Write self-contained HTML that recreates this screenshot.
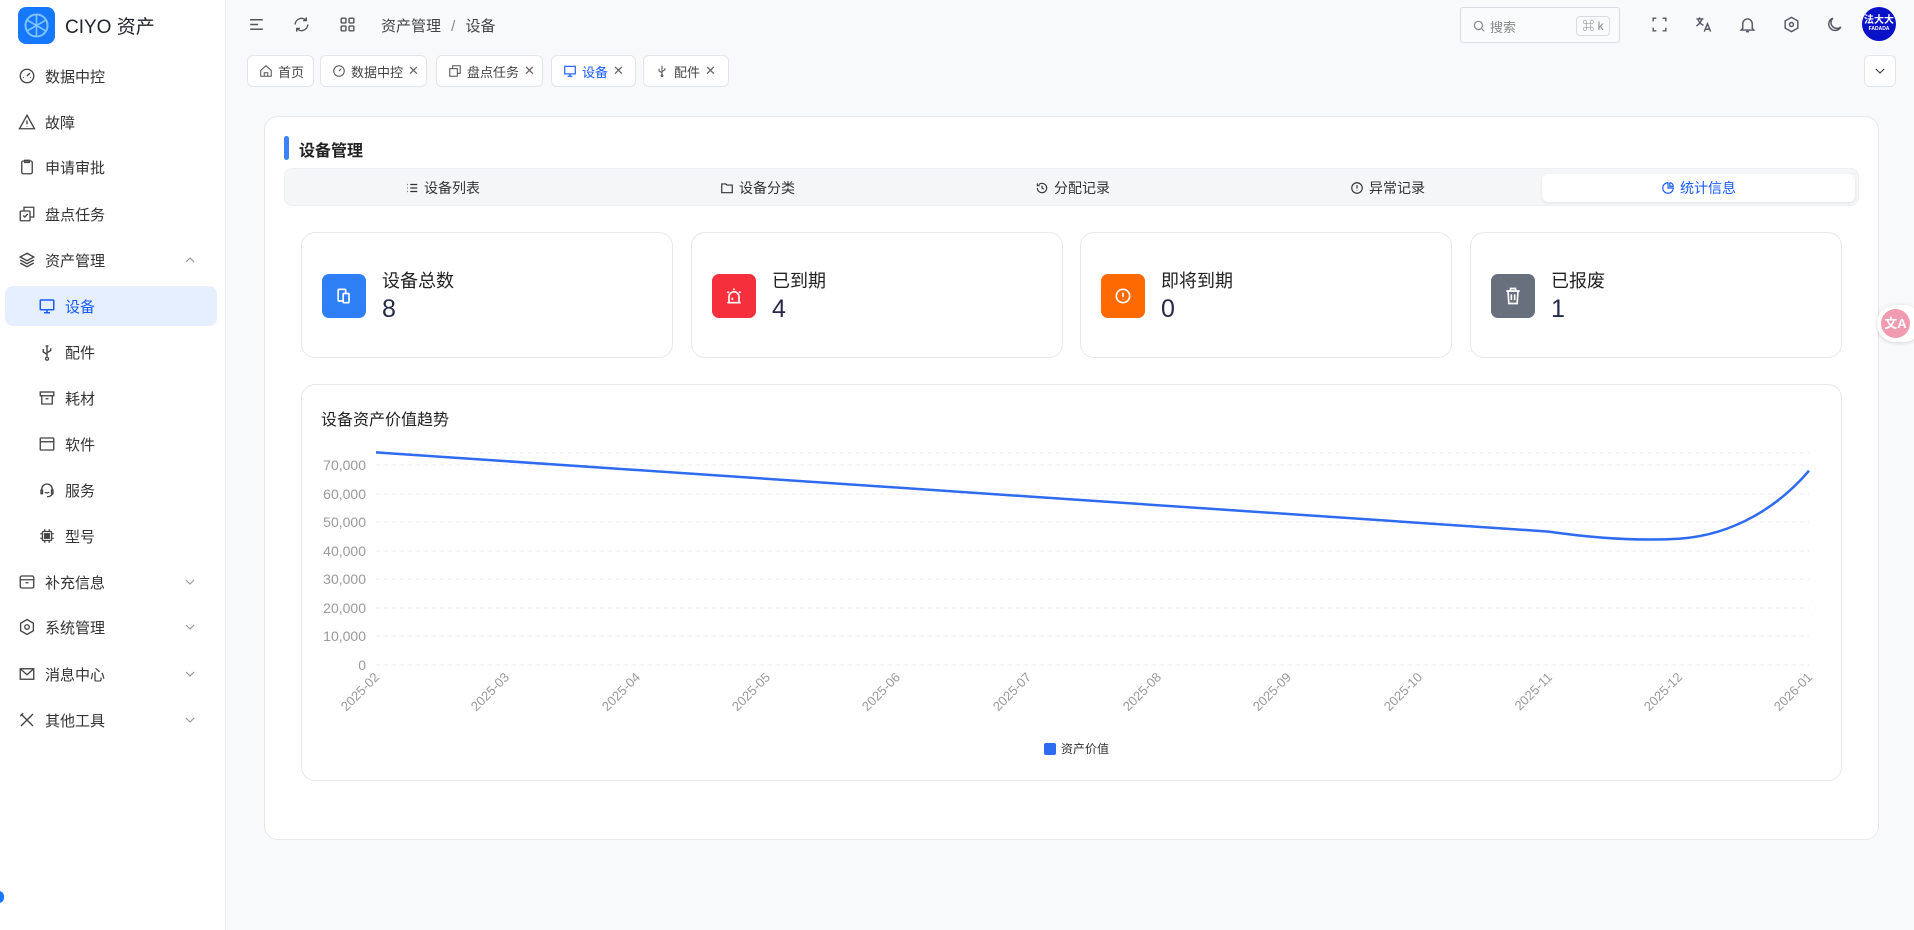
<!DOCTYPE html>
<html><head><meta charset="utf-8"><style>
*{box-sizing:border-box;margin:0;padding:0}
body{width:1914px;height:930px;overflow:hidden;background:#f8f9fb;font-family:"Liberation Sans","Noto Sans CJK SC",sans-serif;color:#1f2329;position:relative}
.side{position:absolute;left:0;top:0;width:226px;height:930px;background:#fff;border-right:1px solid #e8eaee}
.logo{position:absolute;left:18px;top:7px;width:37px;height:37px;border-radius:8px;background:#1677ff}
.brand{position:absolute;left:65px;top:12px;font-size:19px;color:#1f2329}
.mi{position:absolute;left:0;width:226px;height:40px;display:flex;align-items:center;font-size:15px;color:#333}
.mi svg{position:absolute;left:18px;width:18px;height:18px}
.mi span{position:absolute;left:45px}
.mi.sub svg{left:38px}.mi.sub span{left:65px}
.mi .chev{position:absolute;left:184px;width:12px;height:12px}
.act{background:#e6efff;color:#1a5cff;left:5px;width:212px;border-radius:8px}
.act svg{left:33px!important}.act span{left:60px!important}
.hicon{position:absolute;top:15px;width:19px;height:19px}
.tab{position:absolute;top:55px;height:32px;background:#fff;border:1px solid #e2e5ea;border-radius:6px;font-size:13px;color:#444;display:flex;align-items:center;padding-left:11px;gap:5px}
.tab svg{width:14px;height:14px}
.card{position:absolute;background:#fff;border:1px solid #e6e8ec;border-radius:14px}
.seg{position:absolute;top:0;height:38px;display:flex;align-items:center;justify-content:center;font-size:14px;color:#333;gap:5px}
.seg svg{width:14px;height:14px}
.stat{position:absolute;top:232px;width:372px;height:126px;background:#fff;border:1px solid #e6e8ec;border-radius:14px}
.sq{position:absolute;left:20px;top:41px;width:44px;height:44px;border-radius:7px;display:flex;align-items:center;justify-content:center}
.st{position:absolute;left:80px;top:34px;font-size:18px;color:#222}
.sn{position:absolute;left:80px;top:62px;font-size:25px;color:#26294a}
</style></head><body>
<div class="side">
<div class="logo"><svg width="37" height="37" viewBox="0 0 37 37"><circle cx="18.5" cy="18.5" r="11" fill="none" stroke="#7fc3ff" stroke-width="2"/><path d="M18.5 8v21M9 13l19 11M9 24l19-11" stroke="#7fc3ff" stroke-width="1.6"/></svg></div>
<div class="brand">CIYO 资产</div>

<div class="mi" style="top:56px"><svg viewBox="0 0 24 24" fill="none" stroke="#444" stroke-width="1.8"><circle cx="12" cy="12" r="9"/><path d="M12 12l4-4M7 14h1M16 14h1"/></svg><span>数据中控</span></div>
<div class="mi" style="top:102px"><svg viewBox="0 0 24 24" fill="none" stroke="#444" stroke-width="1.8"><path d="M12 3l10 18H2z"/><path d="M12 10v5M12 17.5v.5"/></svg><span>故障</span></div>
<div class="mi" style="top:147px"><svg viewBox="0 0 24 24" fill="none" stroke="#444" stroke-width="1.8"><rect x="5" y="4" width="14" height="17" rx="2"/><path d="M9 3h6v3H9z"/></svg><span>申请审批</span></div>
<div class="mi" style="top:194px"><svg viewBox="0 0 24 24" fill="none" stroke="#444" stroke-width="1.8"><rect x="3" y="8" width="13" height="13" rx="1"/><path d="M8 8V3h13v13h-5M7 14l2 2 4-4"/></svg><span>盘点任务</span></div>
<div class="mi" style="top:240px"><svg viewBox="0 0 24 24" fill="none" stroke="#444" stroke-width="1.8"><path d="M12 3l9 5-9 5-9-5z"/><path d="M3 12l9 5 9-5M3 16l9 5 9-5"/></svg><span>资产管理</span><svg class="chev" viewBox="0 0 12 12" fill="none" stroke="#999" stroke-width="1.2"><path d="M2 8l4-4 4 4"/></svg></div>
<div class="mi sub act" style="top:286px"><svg viewBox="0 0 24 24" fill="none" stroke="#1a5cff" stroke-width="2"><rect x="3" y="4" width="18" height="13" rx="1"/><path d="M8 21h8M12 17v4"/></svg><span>设备</span></div>
<div class="mi sub" style="top:332px"><svg viewBox="0 0 24 24" fill="none" stroke="#444" stroke-width="1.8"><path d="M12 3v16M12 19a2 2 0 1 0 .1 0M12 15l-5-3V8M12 13l5-3V7M10 4h4"/></svg><span>配件</span></div>
<div class="mi sub" style="top:378px"><svg viewBox="0 0 24 24" fill="none" stroke="#444" stroke-width="1.8"><rect x="3" y="4" width="18" height="5"/><path d="M5 9v11h14V9M10 13h4"/></svg><span>耗材</span></div>
<div class="mi sub" style="top:424px"><svg viewBox="0 0 24 24" fill="none" stroke="#444" stroke-width="1.8"><rect x="3" y="4" width="18" height="16" rx="1"/><path d="M3 9h18"/></svg><span>软件</span></div>
<div class="mi sub" style="top:470px"><svg viewBox="0 0 24 24" fill="none" stroke="#444" stroke-width="1.8"><path d="M5 13v-2a7 7 0 0 1 14 0v2M4 12h2v5H4zM18 12h2v5h-2zM19 17c0 2-3 4-7 4M9 15c1.5 1 4.5 1 6 0"/></svg><span>服务</span></div>
<div class="mi sub" style="top:516px"><svg viewBox="0 0 24 24" fill="none" stroke="#444" stroke-width="1.8"><rect x="6" y="6" width="12" height="12" rx="1"/><rect x="9" y="9" width="6" height="6" fill="#444"/><path d="M9 3v3M15 3v3M9 18v3M15 18v3M3 9h3M3 15h3M18 9h3M18 15h3"/></svg><span>型号</span></div>
<div class="mi" style="top:562px"><svg viewBox="0 0 24 24" fill="none" stroke="#444" stroke-width="1.8"><rect x="3" y="4" width="18" height="16" rx="2"/><path d="M3 9h18M10 13h4"/></svg><span>补充信息</span><svg class="chev" viewBox="0 0 12 12" fill="none" stroke="#999" stroke-width="1.2"><path d="M2 4l4 4 4-4"/></svg></div>
<div class="mi" style="top:607px"><svg viewBox="0 0 24 24" fill="none" stroke="#444" stroke-width="1.8"><path d="M12 2l8.5 5v10L12 22l-8.5-5V7z"/><circle cx="12" cy="12" r="3"/></svg><span>系统管理</span><svg class="chev" viewBox="0 0 12 12" fill="none" stroke="#999" stroke-width="1.2"><path d="M2 4l4 4 4-4"/></svg></div>
<div class="mi" style="top:654px"><svg viewBox="0 0 24 24" fill="none" stroke="#444" stroke-width="1.8"><rect x="3" y="5" width="18" height="14"/><path d="M3 5l9 8 9-8"/></svg><span>消息中心</span><svg class="chev" viewBox="0 0 12 12" fill="none" stroke="#999" stroke-width="1.2"><path d="M2 4l4 4 4-4"/></svg></div>
<div class="mi" style="top:700px"><svg viewBox="0 0 24 24" fill="none" stroke="#444" stroke-width="1.8"><path d="M4 4l16 16M20 4L4 20M3 7l4-4"/></svg><span>其他工具</span><svg class="chev" viewBox="0 0 12 12" fill="none" stroke="#999" stroke-width="1.2"><path d="M2 4l4 4 4-4"/></svg></div>
</div>
<div style="position:absolute;left:-6px;top:891px;width:10px;height:12px;border-radius:6px;background:#1677ff"></div>

<!-- header -->
<svg class="hicon" style="left:247px" viewBox="0 0 24 24" fill="none" stroke="#555" stroke-width="1.8"><path d="M4 6h16M4 12h10M4 18h16"/></svg>
<svg class="hicon" style="left:292px" viewBox="0 0 24 24" fill="none" stroke="#555" stroke-width="1.8"><path d="M20 12a8 8 0 0 1-14 5M4 12a8 8 0 0 1 14-5M18 3v4h-4M6 21v-4h4"/></svg>
<svg class="hicon" style="left:338px" viewBox="0 0 24 24" fill="none" stroke="#555" stroke-width="1.8"><rect x="4" y="4" width="6" height="6" rx="1"/><rect x="14" y="4" width="6" height="6" rx="1"/><rect x="4" y="14" width="6" height="6" rx="1"/><rect x="14" y="14" width="6" height="6" rx="1"/></svg>
<div style="position:absolute;left:381px;top:15px;font-size:15px;color:#444">资产管理 <span style="color:#888;margin:0 6px">/</span> 设备</div>
<div style="position:absolute;left:1460px;top:7px;width:160px;height:36px;border:1px solid #d9dce2;background:#fafbfc;border-radius:3px">
<svg style="position:absolute;left:11px;top:11px" width="14" height="14" viewBox="0 0 24 24" fill="none" stroke="#888" stroke-width="2"><circle cx="11" cy="11" r="7"/><path d="M16 16l5 5"/></svg>
<span style="position:absolute;left:29px;top:9px;font-size:13px;color:#888">搜索</span>
<span style="position:absolute;left:115px;top:8px;width:34px;height:20px;border:1px solid #d9dce2;border-radius:4px;font-size:12px;color:#888;text-align:center;line-height:18px">⌘ k</span></div>
<svg class="hicon" style="left:1650px" viewBox="0 0 24 24" fill="none" stroke="#556" stroke-width="1.8"><path d="M4 8V4h4M16 4h4v4M20 16v4h-4M8 20H4v-4"/></svg>
<svg class="hicon" style="left:1694px" viewBox="0 0 24 24" fill="none" stroke="#556" stroke-width="1.8"><path d="M3 5h9M7 3v2M5 5c1 4 4 7 7 8M10 5c-1 4-4 7-7 9M13 21l4-10 4 10M14.5 18h5"/></svg>
<svg class="hicon" style="left:1738px" viewBox="0 0 24 24" fill="none" stroke="#556" stroke-width="1.8"><path d="M6 17V11a6 6 0 0 1 12 0v6l2 2H4zM10 21h4"/></svg>
<svg class="hicon" style="left:1782px" viewBox="0 0 24 24" fill="none" stroke="#556" stroke-width="1.8"><path d="M12 3l8 4.5v9L12 21l-8-4.5v-9z"/><circle cx="12" cy="12" r="2.5"/></svg>
<svg class="hicon" style="left:1825px" viewBox="0 0 24 24" fill="none" stroke="#556" stroke-width="1.8"><path d="M20 15A8 8 0 1 1 10 4a7 7 0 0 0 10 11z"/></svg>
<div style="position:absolute;left:1862px;top:7px;width:34px;height:34px;border-radius:50%;background:#0a12c8;color:#fff;font-size:10px;font-weight:bold;text-align:center;line-height:10px;padding-top:9px">法大大<div style="font-size:5px;line-height:7px">FADADA</div></div>

<!-- tabs -->
<div class="tab" style="left:247px;width:67px"><svg viewBox="0 0 24 24" fill="none" stroke="#555" stroke-width="1.8"><path d="M3 11l9-8 9 8v10H3z"/><path d="M9 21v-6h6v6"/></svg>首页</div>
<div class="tab" style="left:320px;width:107px"><svg viewBox="0 0 24 24" fill="none" stroke="#555" stroke-width="1.8"><circle cx="12" cy="12" r="9"/><path d="M12 12l4-4"/></svg>数据中控 <span style="color:#666">✕</span></div>
<div class="tab" style="left:436px;width:107px"><svg viewBox="0 0 24 24" fill="none" stroke="#555" stroke-width="1.8"><rect x="3" y="8" width="13" height="13"/><path d="M8 8V3h13v13h-5"/></svg>盘点任务 <span style="color:#666">✕</span></div>
<div class="tab" style="left:551px;width:85px;color:#1a5cff"><svg viewBox="0 0 24 24" fill="none" stroke="#1a5cff" stroke-width="2"><rect x="3" y="4" width="18" height="13"/><path d="M8 21h8M12 17v4"/></svg>设备 <span style="color:#666">✕</span></div>
<div class="tab" style="left:643px;width:86px"><svg viewBox="0 0 24 24" fill="none" stroke="#555" stroke-width="1.8"><path d="M12 3v16M12 15l-5-3V8M12 13l5-3V7"/><circle cx="12" cy="20" r="1.5"/></svg>配件 <span style="color:#666">✕</span></div>
<div style="position:absolute;left:1864px;top:55px;width:32px;height:32px;background:#fff;border:1px solid #e2e5ea;border-radius:6px"><svg style="position:absolute;left:9px;top:9px" width="12" height="12" viewBox="0 0 12 12" fill="none" stroke="#444" stroke-width="1.2"><path d="M2 4l4 4 4-4"/></svg></div>

<!-- main card -->
<div class="card" style="left:264px;top:116px;width:1615px;height:724px"></div>
<div style="position:absolute;left:284px;top:136px;width:5px;height:24px;border-radius:3px;background:#3b82f6"></div>
<div style="position:absolute;left:299px;top:137px;font-size:16px;font-weight:bold;color:#222">设备管理</div>
<div style="position:absolute;left:284px;top:168px;width:1575px;height:38px;background:#f5f6f8;border:1px solid #eef0f3;border-radius:8px">
<div style="position:absolute;left:1257px;top:5px;width:313px;height:28px;background:#fff;border-radius:6px;box-shadow:0 1px 3px rgba(0,0,0,.08)"></div>
<div class="seg" style="left:0;width:315px"><svg viewBox="0 0 24 24" fill="none" stroke="#333" stroke-width="2"><path d="M9 6h12M9 12h12M9 18h12M4 6h1M4 12h1M4 18h1"/></svg>设备列表</div>
<div class="seg" style="left:315px;width:315px"><svg viewBox="0 0 24 24" fill="none" stroke="#333" stroke-width="2"><path d="M3 5h7l2 2h9v13H3z"/></svg>设备分类</div>
<div class="seg" style="left:630px;width:315px"><svg viewBox="0 0 24 24" fill="none" stroke="#333" stroke-width="2"><path d="M4 12a8 8 0 1 0 2.5-5.8M4 4v4h4M12 8v4l3 2"/></svg>分配记录</div>
<div class="seg" style="left:945px;width:315px"><svg viewBox="0 0 24 24" fill="none" stroke="#333" stroke-width="2"><circle cx="12" cy="12" r="9"/><path d="M12 7v6M12 16v1"/></svg>异常记录</div>
<div class="seg" style="left:1257px;width:313px;color:#1a5cff"><svg viewBox="0 0 24 24" fill="none" stroke="#1a5cff" stroke-width="2"><path d="M12 3a9 9 0 1 0 9 9h-9z"/><path d="M15 3v6h6a6 6 0 0 0-6-6"/></svg>统计信息</div>
</div>

<div class="stat" style="left:301px"><div class="sq" style="background:#2f7ff6"><svg width="20" height="20" viewBox="0 0 24 24" fill="none" stroke="#fff" stroke-width="2"><rect x="5" y="4" width="9" height="14" rx="1"/><rect x="11" y="9" width="7" height="11" rx="1" fill="#2f7ff6"/></svg></div><div class="st">设备总数</div><div class="sn">8</div></div>
<div class="stat" style="left:691px"><div class="sq" style="background:#f5303c"><svg width="20" height="20" viewBox="0 0 24 24" fill="none" stroke="#fff" stroke-width="2"><path d="M6 20V13a6 6 0 0 1 12 0v7zM4 20h16M12 3v2M4 7l2 1M20 7l-2 1M10 14v3"/></svg></div><div class="st">已到期</div><div class="sn">4</div></div>
<div class="stat" style="left:1080px"><div class="sq" style="background:#ff6a00"><svg width="20" height="20" viewBox="0 0 24 24" fill="none" stroke="#fff" stroke-width="2"><circle cx="12" cy="12" r="8"/><path d="M12 8v5M12 16v.5"/></svg></div><div class="st">即将到期</div><div class="sn">0</div></div>
<div class="stat" style="left:1470px"><div class="sq" style="background:#69707d"><svg width="20" height="20" viewBox="0 0 24 24" fill="none" stroke="#fff" stroke-width="2"><path d="M4 6h16M9 6V3h6v3M6 6l1 15h10l1-15M10 10v7M14 10v7"/></svg></div><div class="st">已报废</div><div class="sn">1</div></div>

<!-- chart card -->
<div class="card" style="left:301px;top:384px;width:1541px;height:397px"></div>
<div style="position:absolute;left:321px;top:406px;font-size:16px;color:#222">设备资产价值趋势</div>
<svg style="position:absolute;left:0;top:0" width="1914" height="930" font-family="Liberation Sans, sans-serif">
<g stroke="#e8e8e8" stroke-dasharray="4 4">
<line x1="376" x2="1809" y1="453" y2="453"/><line x1="376" x2="1809" y1="465" y2="465"/><line x1="376" x2="1809" y1="494" y2="494"/><line x1="376" x2="1809" y1="522" y2="522"/><line x1="376" x2="1809" y1="551" y2="551"/><line x1="376" x2="1809" y1="579" y2="579"/><line x1="376" x2="1809" y1="608" y2="608"/><line x1="376" x2="1809" y1="636" y2="636"/><line x1="376" x2="1809" y1="665" y2="665"/></g>
<g fill="#999" font-size="14" text-anchor="end">
<text x="366" y="470">70,000</text><text x="366" y="499">60,000</text><text x="366" y="527">50,000</text><text x="366" y="556">40,000</text><text x="366" y="584">30,000</text><text x="366" y="613">20,000</text><text x="366" y="641">10,000</text><text x="366" y="670">0</text></g>
<g fill="#999" font-size="13" text-anchor="end">
<text transform="translate(380,678) rotate(-45)">2025-02</text>
<text transform="translate(510,678) rotate(-45)">2025-03</text>
<text transform="translate(641,678) rotate(-45)">2025-04</text>
<text transform="translate(771,678) rotate(-45)">2025-05</text>
<text transform="translate(901,678) rotate(-45)">2025-06</text>
<text transform="translate(1032,678) rotate(-45)">2025-07</text>
<text transform="translate(1162,678) rotate(-45)">2025-08</text>
<text transform="translate(1292,678) rotate(-45)">2025-09</text>
<text transform="translate(1423,678) rotate(-45)">2025-10</text>
<text transform="translate(1553,678) rotate(-45)">2025-11</text>
<text transform="translate(1683,678) rotate(-45)">2025-12</text>
<text transform="translate(1813,678) rotate(-45)">2026-01</text></g>
<path d="M376 452.4 L1548.7 531.6 C1600 539 1640 541 1679 538.7 C1735 535 1780 505 1809 470.7" fill="none" stroke="#2e6bf0" stroke-width="2.5"/>
<rect x="1044" y="743" width="12" height="12" rx="2" fill="#2e6bf0"/>
<text x="1061" y="753" font-size="12" fill="#333" font-family="Liberation Sans, Noto Sans CJK SC, sans-serif">资产价值</text>
</svg>

<div style="position:absolute;left:1877px;top:305px;width:45px;height:37px;border-radius:18px;background:#fff;box-shadow:0 1px 4px rgba(0,0,0,.15)"><div style="position:absolute;left:4px;top:4px;width:29px;height:29px;border-radius:50%;background:#f19bb0;color:#fff;font-size:13px;font-weight:bold;text-align:center;line-height:29px">文A</div></div>
</body></html>
